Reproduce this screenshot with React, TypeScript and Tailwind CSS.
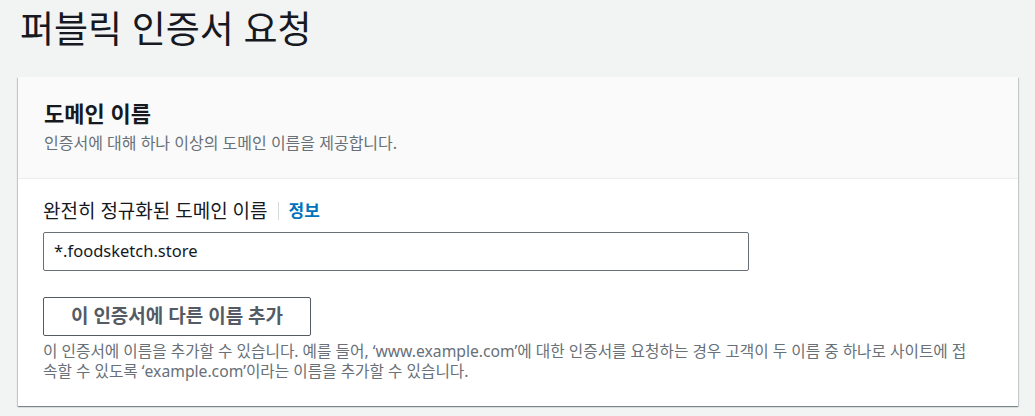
export default function App() {
  const font = { fontFamily: '"Noto Sans", "Noto Sans CJK KR", sans-serif' };
  return (
    <div className="w-[1035px] h-[416px] bg-[#f2f3f3] pl-[18px] pr-[17px] overflow-hidden" style={font}>
      <h1 className="pl-[2px] pt-[6px] h-[77px] text-[37px] leading-[46px] font-normal text-[#16191f]">퍼블릭 인증서 요청</h1>
      <div className="bg-white shadow-[0_1px_1px_0_rgba(0,28,36,0.3),1px_1px_1px_0_rgba(0,28,36,0.15),-1px_1px_1px_0_rgba(0,28,36,0.15)]">
        <div className="bg-[#fafafa] border-b border-[#eaeded] h-[102px] px-[26px] pt-[21px]">
          <h2 className="text-[22px] leading-[30px] font-bold text-[#16191f]">도메인 이름</h2>
          <p className="text-[16px] leading-[22px] text-[#687078] mt-[4px]">인증서에 대해 하나 이상의 도메인 이름을 제공합니다.</p>
        </div>
        <div className="px-[25px] pt-[20px] pb-[25px]">
          <div className="flex items-center h-[24px] text-[19px] text-[#16191f]">
            <span>완전히 정규화된 도메인 이름</span>
            <span className="mx-[10px] w-px h-[18px] bg-[#d5dbdb]"></span>
            <span className="text-[#0073bb] font-bold text-[17px]">정보</span>
          </div>
          <div className="mt-[9px] w-[706px] h-[39px] border border-[#687078] rounded-[2px] flex items-center px-[10px] text-[16.5px] text-[#16191f]">
            *.foodsketch.store
          </div>
          <button className="mt-[26px] w-[268px] h-[39px] border border-[#545b64] rounded-[2px] bg-white text-[#545b64] font-bold text-[19px] flex items-center justify-center">
            이 인증서에 다른 이름 추가
          </button>
          <p className="mt-[5px] w-[932px] text-[15.7px] leading-[20px] text-[#687078]">
            이 인증서에 이름을 추가할 수 있습니다. 예를 들어, ‘www.example.com’에 대한 인증서를 요청하는 경우 고객이 두 이름 중 하나로 사이트에 접속할 수 있도록 ‘example.com’이라는 이름을 추가할 수 있습니다.
          </p>
        </div>
      </div>
    </div>
  );
}
